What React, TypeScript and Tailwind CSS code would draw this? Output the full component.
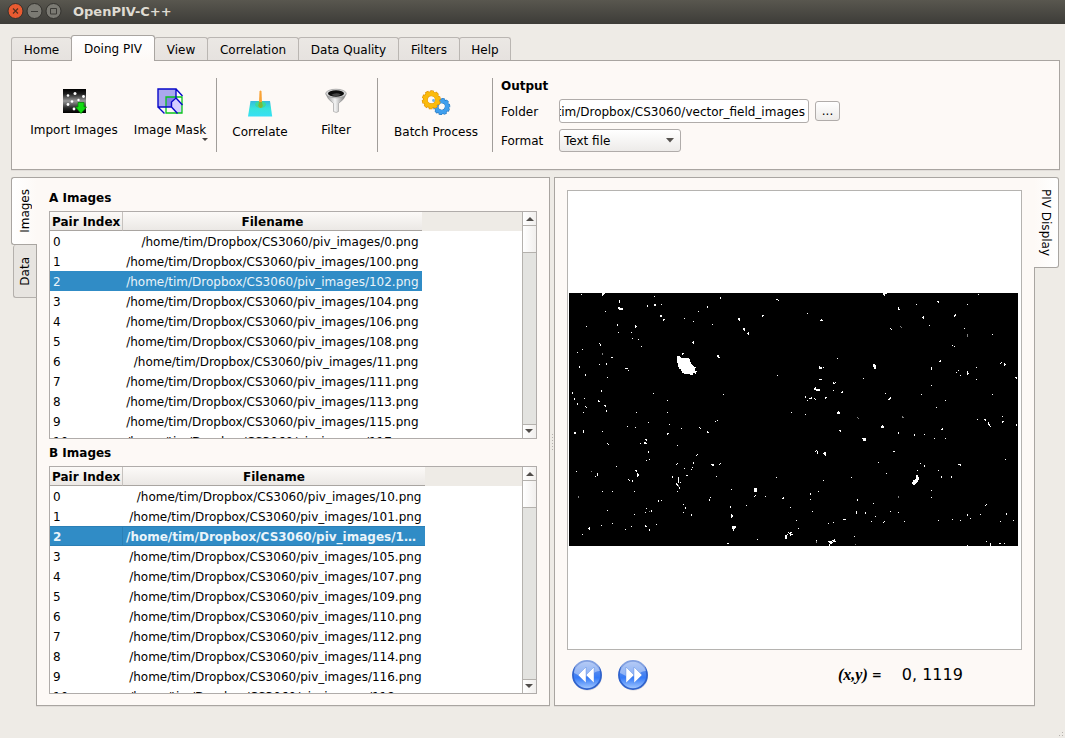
import React from "react";

const A_FILES = ["0", "100", "102", "104", "106", "108", "11", "111", "113", "115", "117"];
const B_FILES = ["10", "101", "103", "105", "107", "109", "110", "112", "114", "116", "118"];

type Tile = { x: number; y: number; dots: string; gray?: string };

// Particle positions per quadrant, in thirds of a pixel: "x,y[,w,h]" (w and h in pixels).
const TILES: Tile[] = [
  {
    x: -4,
    y: -8,
    dots:
      "49,28 112,25,2,2 112,28,1,2 118,25 268,34 466,36,1,2 634,43,2,1 640,46 163,46,1,3 160,67,2,2 163,70,4,2 121,79 247,61,1,2 268,58,2,2 289,58 427,64,1,2 400,79 286,91,2,2 295,103,2,1 295,106 358,100 385,109 442,118 520,100,2,1 520,103,2,1 523,106 592,94 592,91,2,1 535,130,2,2 538,136 547,145,2,1 550,142,1,3 64,124 157,118,1,2 160,142 211,121,1,3 214,124 199,142 202,160 220,163 229,184 103,175 106,178,1,2 52,193 37,202 139,217,2,1 382,172,2,1 385,169,1,3 457,211,2,2 460,217,2,1 352,205,2,1 352,208 43,244,1,2 103,238 124,235,1,2 181,250,3,1 190,256 61,268,1,2 127,277 637,271 22,322,1,2 109,316,1,2 28,340,1,2 58,340 37,355,1,2 100,346,1,2 103,349 61,364 64,367 118,361,2,1 121,364 124,376,1,2 55,382 214,382 265,325 307,346 307,382 475,328 679,382",
    gray: "112,205,1,2",
  },
  {
    x: 221,
    y: -8,
    dots:
      "280,25,4,1 280,28,2,1 283,31 565,28 443,49,2,1 445,52 379,58 532,58 325,67,1,3 328,73 52,85 91,106,3,1 94,103 397,97,2,1 400,94,1,3 493,91,1,2 496,88,1,2 418,121 301,130 304,133 523,130 607,148 487,181 493,184 142,220 448,229,2,1 451,226 88,244,1,3 91,247,2,2 100,247 250,238,2,3 253,241,2,4 424,247,1,3 559,247 631,235 634,232 643,235,1,3 646,238 532,259,1,4 535,265 505,256 499,262 511,271 559,283 676,277,2,1 679,280 88,283,3,1 220,280 130,292,1,2 133,295 136,292 424,301 73,310,2,2 76,307,1,2 79,313,4,2 130,316 154,322,2,1 157,319 286,325 394,328 607,328 46,334,1,2 52,346 58,340,2,1 64,337,1,2 73,340 76,343 106,340 106,337,2,1 295,343,2,1 298,340,2,1 301,337 466,346 4,382 46,388 142,382,3,2 145,379 148,385 439,367 637,394 562,403 583,403,2,1",
    gray: "331,124 334,127 532,148,1,3 202,397 205,400 337,394,1,2 340,397",
  },
  {
    x: -4,
    y: 122,
    dots:
      "250,22 187,34 211,37 313,28 349,40 403,37 406,40 427,49,1,2 430,52 451,19 457,16 28,52,2,2 55,46,1,3 112,49 307,55,2,1 307,58 127,85 130,88 241,73,2,1 244,76 238,82,2,2 244,85 226,85 337,91 250,109,1,2 244,136 253,133 154,154 394,121 397,118 385,142,1,2 382,157 379,163 334,148 337,145 358,160 439,148,3,1 442,151,2,1 463,148 466,145 364,181,2,1 454,184 322,184,1,2 34,169 91,184 97,175,1,3 211,166,2,1 214,169 217,175,1,4 220,178,1,2 190,193 193,196 202,196,1,2 340,187,1,6 346,202 334,205,1,2 337,208,1,2 340,211 343,217,1,2 337,229 112,229 142,229 208,229 499,223 634,187 568,220,2,4 571,220,2,4 571,241 568,244 601,244 652,250,2,1 655,247 433,253,1,2 436,247 280,256,1,2 289,256 355,268 361,277,1,2 355,292 379,298,1,2 544,271 496,274,1,2 499,298,1,4 502,301,1,2 676,277 244,280 241,292 259,286,1,2 127,286 208,298 142,325 109,331 199,334 274,328 241,331,1,2 244,334 253,343,1,2 181,343 70,340,2,1 73,337,1,3 52,358 502,334,2,2 505,337,2,2 508,334,2,2 502,340,2,1 505,343,1,2 577,373 487,385,2,1 661,361,2,4 667,358 670,352 673,355 676,355,1,2 679,352 679,358,2,1",
    gray: "79,169 40,244,1,2 253,289 340,211,1,2",
  },
  {
    x: 221,
    y: 122,
    dots:
      "637,4 637,19,1,2 640,19 562,13 583,13,2,1 586,16 595,22,1,3 598,28,1,2 601,34 679,28,1,2 148,46,2,1 151,49 274,34,3,2 277,31,1,3 454,43,2,1 457,40 325,52,1,2 373,58,1,2 403,58 433,70 466,70 217,70,4,1 220,73,3,2 76,109 79,106 82,109,1,3 100,115,3,1 103,112,2,3 106,121 310,109,2,1 265,142 391,145 403,151,1,2 646,133 505,148,3,1 511,151 382,166 445,166 289,175 184,187 100,196 454,184,1,2 484,184,1,2 424,226 85,229 61,235,1,2 61,253 424,247 202,253,1,2 250,265 586,271 589,268 1,277 67,289 199,289,1,3 226,292,1,2 301,289 325,292 256,304 532,298,1,2 541,310 571,298 649,295,1,2 160,313,3,1 19,316 115,325 130,322 244,319 280,322 283,319 343,319 445,316 487,313 511,316 631,319 670,316 25,340 1,352,1,4 4,358,2,1 193,364 79,376 115,379,4,1 118,382,4,1 127,376,3,1 133,373 130,379,3,1 121,385,2,1 118,388,1,2 589,379 601,385,1,3 628,385,2,1 643,385 532,391",
    gray: "202,7 205,10 337,4,1,2 340,7 325,244,1,2 79,379,1,2 196,388",
  },
];

function Dots({ tile, list, fill }: { tile: Tile; list: string; fill: string }) {
  return (
    <g fill={fill}>
      {list.split(" ").map((item, i) => {
        const [x, y, w = 1, h = 1] = item.split(",").map(Number);
        return <rect key={i} x={Math.floor(x / 3) + tile.x} y={Math.floor(y / 3) + tile.y} width={w} height={h} />;
      })}
    </g>
  );
}

function ParticleImage() {
  return (
    <svg width="449" height="253" className="block bg-black" shapeRendering="crispEdges">
      {TILES.map((t, i) => (
        <React.Fragment key={i}>
          <Dots tile={t} list={t.dots} fill="#fff" />
          {t.gray && <Dots tile={t} list={t.gray} fill="#808080" />}
        </React.Fragment>
      ))}
      <path fill="#fff" d="M108 64v-1h3v1h1v1h8v1h1v3h1v2h1v1h1v1h1v1h2v1h-1v3h2v1h-1v2h-1v-1h-2v2h-3v-1h-6v-1h-2v-2h-1v-2h-2v-2h-1v-4h-1v-3z" />
      <path fill="#fff" d="M347 182h2v2h1v3h-1v2h-1v1h-1v1h-1v1h-2v-1h-1v-2h1v-2h2v-1h1z" />
    </svg>
  );
}

function TitleBar() {
  return (
    <div className="flex h-6 items-center bg-linear-to-b from-[#59574f] to-[#3d3c38] pl-[7px] text-[#dfdbd2]">
      <svg width="56" height="20" viewBox="0 0 56 20" fill="none">
        <circle cx="8.5" cy="9" r="7.5" fill="#ea5b31" stroke="#33322e" />
        <path d="M6 6.5l5 5m0-5l-5 5" stroke="#54301f" strokeWidth="1.2" />
        <circle cx="27.5" cy="9" r="7.5" fill="#7b7a73" stroke="#33322e" />
        <path d="M24 9.500h7" stroke="#3c3b37" />
        <circle cx="46.500" cy="9" r="7.5" fill="#7b7a73" stroke="#33322e" />
        <path d="M43.500 6.500h6v5.500h-6z" stroke="#3c3b37" />
      </svg>
      <span className="ml-2.5 -mt-px text-[13px] font-bold">OpenPIV-C++</span>
    </div>
  );
}

const TABS = [
  { label: "Home", cls: "w-[61px] -mr-px" },
  { label: "Doing PIV", cls: "w-[84px]", active: true },
  { label: "View", cls: "w-[54px] -ml-px" },
  { label: "Correlation", cls: "w-[92px] -ml-px" },
  { label: "Data Quality", cls: "w-[101px] -ml-px" },
  { label: "Filters", cls: "w-[62px] -ml-px" },
  { label: "Help", cls: "w-[52px] -ml-px" },
];

function TabBar() {
  return (
    <div className="flex items-end">
      {TABS.map((t) =>
        t.active ? (
          <div key={t.label} className={`z-10 -mb-px flex h-[26px] items-center justify-center rounded-t-[3px] border border-b-0 border-[#a9a5a1] bg-linear-to-b from-white to-[#fdf9f6] ${t.cls}`}>
            {t.label}
          </div>
        ) : (
          <div key={t.label} className={`flex h-[23px] items-center justify-center rounded-t-[3px] border border-b-0 border-[#bab6b2] bg-linear-to-b from-[#ebe8e4] to-[#e6e2df] pt-px ${t.cls}`}>
            {t.label}
          </div>
        ),
      )}
    </div>
  );
}

function ImportIcon() {
  return (
    <svg width="25" height="25" viewBox="0 0 25 25">
      <defs>
        <linearGradient id="imp" x2="0" y2="1">
          <stop offset="0" stopColor="#000" />
          <stop offset=".2" stopColor="#1d1d1d" />
          <stop offset=".5" stopColor="#999" />
          <stop offset=".8" stopColor="#252525" />
          <stop offset="1" stopColor="#000" />
        </linearGradient>
      </defs>
      <path fill="url(#imp)" d="M1 0h23v24H1z" />
      <g fill="#fff">
        <circle cx="13" cy="4.500" r="1.500" />
        <circle cx="6" cy="6.500" r="1.300" />
        <circle cx="21.500" cy="7.500" r="1.400" />
        <circle cx="10" cy="12.500" r="1.300" />
        <circle cx="6" cy="15.500" r="1.400" />
        <circle cx="16.500" cy="11" r="1.200" />
        <circle cx="12" cy="20" r="1.400" />
      </g>
      <path d="M16 13.500h6V18h2.500L19 24.500 13.500 18H16z" fill="#13db12" stroke="#088a08" strokeWidth=".8" />
    </svg>
  );
}

function MaskIcon() {
  return (
    <svg width="26" height="26" viewBox="0 0 26 26">
      <path d="M1 1h18v8l-5 5v5H1z" fill="#aaa8ee" />
      <path d="M9 9h10l-5 5v5H9z" fill="#8480ea" />
      <path d="M14 19v-5l5-5 6 7v9h-5z" fill="#d3ceff" />
      <path d="M9 9h16v16H9z" fill="none" stroke="#08c51b" strokeWidth="1.300" />
      <path d="M1 1h18v9l-4.500 4v5H1zM19 1l6.500 7M1 19l6.500 6.500M14.500 19l6 6.500M19 10l6.500 7" fill="none" stroke="#0909c9" strokeWidth="1.400" />
    </svg>
  );
}

function CorrelateIcon() {
  return (
    <svg width="26" height="28" viewBox="0 0 26 28">
      <defs>
        <linearGradient id="cor" x2="0" y2="1">
          <stop stopColor="#35b9df" />
          <stop offset=".5" stopColor="#36e4dc" />
          <stop offset="1" stopColor="#37dff5" />
        </linearGradient>
      </defs>
      <path d="M3.500 12h19.500l2.200 15.500H1z" fill="url(#cor)" />
      <ellipse cx="13.500" cy="15.500" rx="5.500" ry="3.500" fill="#38dba0" />
      <path d="M12.500 2.500q1-2 2 0l.7 15q-1.700 3-3.400 0z" fill="#f9a336" />
      <path d="M12 13h3l.8 4q-2 4-4.600 0z" fill="#79ba3a" />
    </svg>
  );
}

function FilterIcon() {
  return (
    <svg width="24" height="26" viewBox="0 0 24 26">
      <defs>
        <linearGradient id="fun">
          <stop stopColor="#8b8b8b" />
          <stop offset=".45" stopColor="#f5f5f5" />
          <stop offset="1" stopColor="#747474" />
        </linearGradient>
      </defs>
      <path d="M2 6q1 5 7.500 9.500v8q3 2 5 0v-8Q21 11 22 6z" fill="url(#fun)" stroke="#888" strokeWidth=".5" />
      <ellipse cx="12" cy="5.500" rx="10.300" ry="4.300" fill="#d6d6d6" stroke="#969696" strokeWidth=".7" />
      <ellipse cx="12" cy="5.500" rx="8" ry="3.200" fill="#0c0c0c" />
      <path d="M7 7q5-3 10-.5-4 3-10 .5" fill="#444" />
    </svg>
  );
}

// Ten teeth: each dash period is 36 degrees of the circle.
function Gear({ fill, stroke }: { fill: string; stroke: string }) {
  return (
    <>
      <circle r="8.200" fill="none" stroke={stroke} strokeWidth="2.600" strokeDasharray="3.450 1.702" />
      <circle r="6" fill="none" stroke={stroke} strokeWidth="5" />
      <circle r="5.900" fill="none" stroke={fill} strokeWidth="4" />
      <circle r="8" fill="none" stroke={fill} strokeWidth="1.800" strokeDasharray="2.800 2.227" strokeDashoffset="-.3" />
    </>
  );
}

function GearsIcon() {
  return (
    <svg width="30" height="28" viewBox="0 0 30 28">
      <g transform="translate(20.700 17.500) rotate(15) scale(.9)">
        <Gear fill="#3f9fee" stroke="#2673b7" />
      </g>
      <g transform="translate(10.300 10.800) rotate(10)">
        <Gear fill="#fbbb0c" stroke="#dc8f08" />
      </g>
      <circle cx="12.500" cy="11.500" r="1.400" fill="#6db1ea" />
    </svg>
  );
}

function Tool({ label, cls, children }: { label: string; cls: string; children: React.ReactNode }) {
  return (
    <div className={`flex h-[90px] shrink-0 flex-col items-center ${cls}`}>
      <div className="flex h-8 items-center">{children}</div>
      <span className="mt-[5px] whitespace-nowrap leading-4">{label}</span>
    </div>
  );
}

function Separator({ cls = "" }: { cls?: string }) {
  return <div className={`mt-[17px] h-[74px] w-px shrink-0 bg-[#a19d9a] ${cls}`} />;
}

function Toolbar() {
  return (
    <div className="flex h-[110px] w-[1049px] items-start border border-[#a9a5a1] bg-[#fdf9f6] shadow-[0_1px_0_#e1ddd9]">
      <Tool label="Import Images" cls="ml-1.5 w-28 pt-6"><ImportIcon /></Tool>
      <div className="flex flex-col items-end">
        <Tool label="Image Mask" cls="w-20 pt-6 -mb-[13px]"><MaskIcon /></Tool>
        <svg width="6" height="3" className="mr-[2px]"><path d="M0 0h6L3 3z" fill="#44413f" /></svg>
      </div>
      <Separator cls="ml-1.5" />
      <Tool label="Correlate" cls="w-[86px] pt-[26px]"><CorrelateIcon /></Tool>
      <Tool label="Filter" cls="w-[66px] pt-6"><FilterIcon /></Tool>
      <Separator cls="ml-2" />
      <Tool label="Batch Process" cls="w-[114px] pl-[2px] pt-[26px]"><GearsIcon /></Tool>
      <Separator />
      <div className="ml-2 flex flex-col pt-[17px]">
        <div className="h-4 font-bold leading-4">Output</div>
        <div className="mt-[5px] flex h-6 items-center">
          <span className="w-[58px] pt-px">Folder</span>
          <div className="flex h-6 w-[250px] items-center justify-end overflow-hidden rounded-[3px] border border-[#b0acaa] bg-white pr-[3px] pt-px">
            <span className="whitespace-nowrap">tim/Dropbox/CS3060/vector_field_images</span>
          </div>
          <div className="ml-1.5 flex h-5 w-[25px] items-center justify-center rounded-[3px] border border-[#b0acaa] bg-linear-to-b from-white to-[#edebe9]">...</div>
        </div>
        <div className="mt-[5px] flex h-6 items-center">
          <span className="w-[58px] pt-px">Format</span>
          <div className="flex h-[23px] w-[122px] items-center justify-between rounded-[3px] border border-[#b0acaa] bg-linear-to-b from-white to-[#edebe9] pl-1 pr-1.5 pt-px">
            Text file
            <svg width="8" height="5"><path d="M0 0h8L4 4.500z" fill="#55524f" /></svg>
          </div>
        </div>
      </div>
    </div>
  );
}

function ScrollBar() {
  return (
    <div className="flex w-[14px] shrink-0 flex-col border-l border-[#b4b1ad] bg-[#e3e3e0]">
      <div className="flex h-[14px] items-center justify-center border-b border-[#b4b1ad] bg-linear-to-r from-white to-[#f1efed]">
        <svg width="8" height="4"><path d="M0 4h8L4 0z" fill="#504d4a" /></svg>
      </div>
      <div className="h-[27px] border-b border-[#b4b1ad] bg-linear-to-r from-white to-[#f1efed]" />
      <div className="flex-1" />
      <div className="flex h-[14px] items-center justify-center border-t border-[#b4b1ad] bg-linear-to-r from-white to-[#f1efed] pb-px pr-px">
        <svg width="8" height="4"><path d="M0 0h8L4 4z" fill="#504d4a" /></svg>
      </div>
    </div>
  );
}

function FileTable({ files, wide }: { files: string[]; wide?: boolean }) {
  return (
    <div className="flex h-[228px] w-[488px] overflow-hidden border border-[#b0acaa] bg-white">
      <div className="flex min-w-0 flex-1 flex-col overflow-hidden">
        <div className="flex h-5 shrink-0 bg-[#eeebe6] font-bold leading-[20px] -mb-px">
          <div className="h-[19px] w-[73px] shrink-0 whitespace-nowrap border-b border-r border-b-[#a9a5a1] border-r-[#c6c2be] bg-linear-to-b from-[#fcfaf8] to-[#ebe8e5] pl-[2px]">Pair Index</div>
          <div className={`h-[19px] shrink-0 border-b border-[#a9a5a1] bg-linear-to-b from-[#fcfaf8] to-[#ebe8e5] text-center ${wide ? "w-[302px]" : "w-[299px]"}`}>Filename</div>
        </div>
        <div className="flex flex-col bg-white">
          {files.map((f, i) => {
            const sel = i === 2;
            const bold = sel && wide;
            return (
              <div key={f} className={`flex h-5 shrink-0 whitespace-nowrap ${wide ? "w-[375px]" : "w-[372px]"} ${sel ? "bg-[#308cc6] text-[#eaf4fa]" : ""} ${bold ? "border-y border-[#2b7fb5] font-bold leading-5" : "leading-[22px]"}`}>
                <div className={`w-[73px] shrink-0 pl-[3px] ${bold ? "border-r border-[#2b7fb5]" : ""}`}>{i}</div>
                <div className={bold ? "flex-1 pl-[3px]" : "flex-1 pr-[3.5px] text-right"}>
                  /home/tim/Dropbox/CS3060/piv_images/{bold ? "1…" : `${f}.png`}
                </div>
              </div>
            );
          })}
        </div>
      </div>
      <ScrollBar />
    </div>
  );
}

function NavButton({ next }: { next?: boolean }) {
  const id = next ? "navNext" : "navPrev";
  return (
    <svg width="32" height="32" viewBox="0 0 32 32">
      <defs>
        <linearGradient id={id} x2="0" y2="1">
          <stop stopColor="#86a9ee" />
          <stop offset=".45" stopColor="#4a84f0" />
          <stop offset=".6" stopColor="#357bf8" />
          <stop offset="1" stopColor="#a8cbff" />
        </linearGradient>
      </defs>
      <circle cx="16.500" cy="17" r="14.500" fill="#d7d5da" />
      <circle cx="16" cy="16" r="14.100" fill={`url(#${id})`} stroke="#2f62cc" strokeWidth="1.700" />
      <path d="M3 14a13 13 0 0 1 26-2q-5 0-8 4-9 4-18-2" fill="#fff" opacity=".4" />
      <path
        d="M15 8v16l-8-8zM23 8v16l-8-8z"
        fill="#fff"
        stroke="#4d81dd"
        strokeWidth=".4"
        transform={next ? "translate(32 0) scale(-1 1)" : undefined}
      />
    </svg>
  );
}

export default function App() {
  return (
    <div className="flex h-[738px] w-[1065px] flex-col overflow-hidden bg-[#eeebe6] font-['DejaVu_Sans',sans-serif] text-[12px] text-black">
      <TitleBar />
      <div className="flex flex-1 flex-col pl-[11px] pt-[11px]">
        <TabBar />
        <Toolbar />
        <div className="mt-[7px] flex">
          <div className="z-10 -mr-px flex w-[26px] flex-col items-end">
            <div className="flex h-[68px] w-[26px] items-center justify-center rounded-l-[3px] border border-r-0 border-[#a9a5a1] bg-linear-to-r from-white to-[#fdf9f6]">
              <span className="rotate-180 [writing-mode:vertical-rl]">Images</span>
            </div>
            <div className="flex h-[53px] w-6 items-center justify-center rounded-l-[3px] border border-t-0 border-[#b4b0ac] border-r-[#a9a5a1] bg-[#e7e4e0]">
              <span className="rotate-180 [writing-mode:vertical-rl]">Data</span>
            </div>
          </div>
          <div className="flex h-[529px] w-[514px] flex-col border border-[#a9a5a1] bg-[#fdf9f6] pl-3 shadow-[0_1px_0_#e1ddd9]">
            <div className="mt-3 h-4 font-bold leading-4">A Images</div>
            <div className="mt-[5px]"><FileTable files={A_FILES} /></div>
            <div className="mt-1.5 h-4 font-bold leading-4">B Images</div>
            <div className="mt-[5px]"><FileTable files={B_FILES} wide /></div>
          </div>
          <div className="flex w-1 flex-col items-end justify-center gap-0.5">
            {[0, 1, 2, 3, 4, 5].map((i) => (
              <div key={i} className="mr-px size-px bg-[#b5b1ad]" />
            ))}
          </div>
          <div className="flex h-[529px] w-[481px] flex-col border border-[#a9a5a1] bg-[#fdf9f6] pl-3 pt-3 shadow-[0_1px_0_#e1ddd9]">
            <div className="flex h-[460px] w-[455px] items-center border border-[#b5b3b0] bg-white pb-[2px] pl-px">
              <ParticleImage />
            </div>
            <div className="flex h-[50px] items-center pl-1">
              <NavButton />
              <span className="w-3.5" />
              <NavButton next />
              <span className="ml-[189px] font-['Liberation_Serif',serif] text-[16px] font-bold italic">(x,y)</span>
              <span className="ml-1 font-bold">=</span>
              <span className="ml-5 whitespace-nowrap text-[16px]">0, 1119</span>
            </div>
          </div>
          <div className="z-10 -ml-px flex h-[91px] w-[25px] items-center justify-center rounded-r-[3px] border border-l-0 border-[#a9a5a1] bg-linear-to-r from-[#fdf9f6] to-white">
            <span className="[writing-mode:vertical-rl]">PIV Display</span>
          </div>
        </div>
        <div className="mt-auto flex justify-end gap-0.5 pb-0.5 pr-0.5">
          <span className="mt-[3px] size-px bg-[#b5b1ad]" />
          <span className="size-px bg-[#b5b1ad] shadow-[0_3px_0_#b5b1ad]" />
        </div>
      </div>
    </div>
  );
}
